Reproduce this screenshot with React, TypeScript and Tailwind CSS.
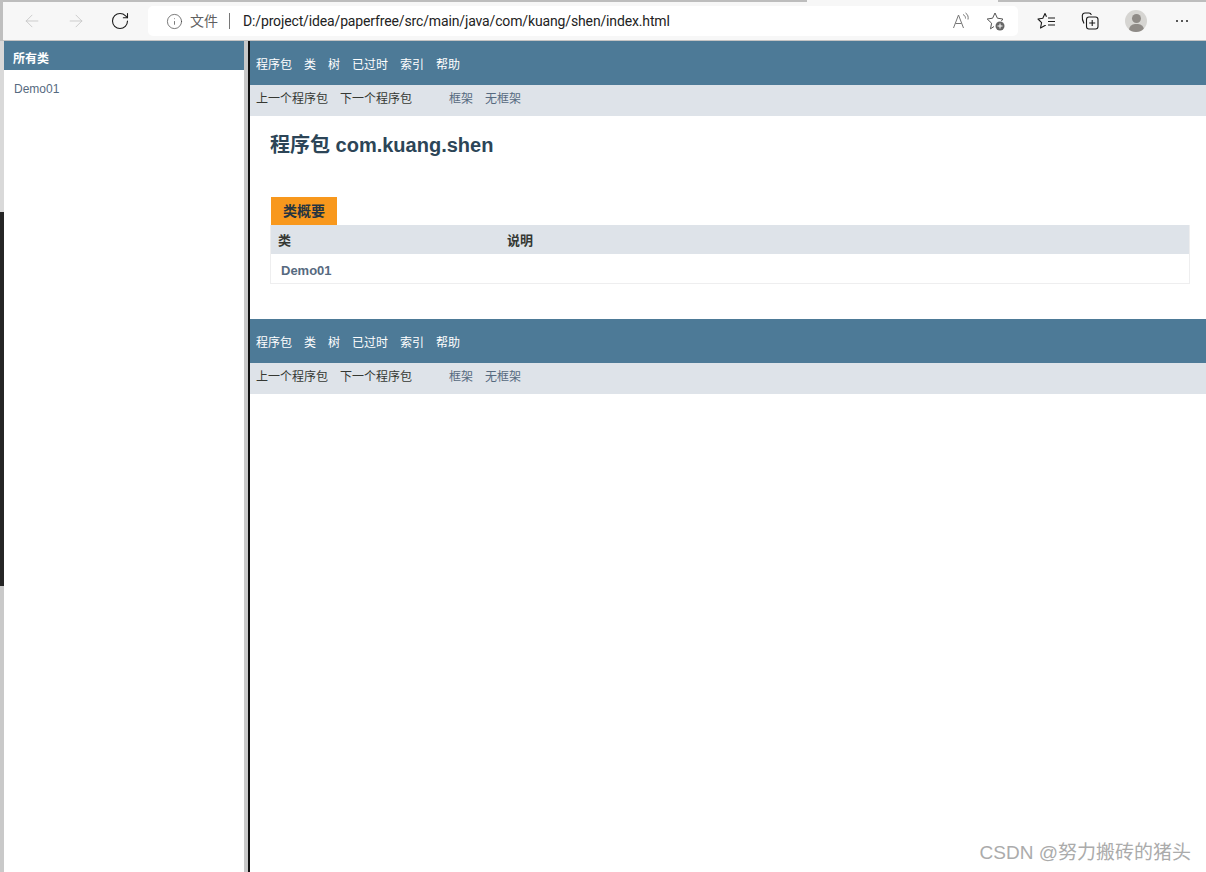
import { ArrowLeft, ArrowRight, RotateCw, Info } from 'lucide-react'

const FONT = "font-['Liberation_Sans','Noto_Sans_CJK_SC',sans-serif]"

const NAV = ['程序包', '类', '树', '已过时', '索引', '帮助']

function TopNav() {
  return (
    <div className="h-[44px] bg-[#4d7a97] flex items-end pb-[12px] pl-[6px] gap-[12px] text-[12px] leading-[16px] text-white">
      {NAV.map(item => (
        <span key={item}>{item}</span>
      ))}
    </div>
  )
}

function SubNav() {
  return (
    <div className="h-[31px] bg-[#dee3e9] flex items-center pl-[6px] text-[12px] leading-[16px] pb-[3px]">
      <span className="text-[#353833] mr-[12px]">上一个程序包</span>
      <span className="text-[#353833] mr-[37px]">下一个程序包</span>
      <span className="text-[#566a80] mr-[12px]">框架</span>
      <span className="text-[#566a80]">无框架</span>
    </div>
  )
}

function BrowserBar() {
  return (
    <div className="h-[41px] shrink-0 flex">
      <div className="w-[3px] bg-[#bfbfbf] shrink-0" />
      <div className="flex-1 min-w-0 bg-[#f7f7f7] border-b border-[#c4c4c4] flex flex-col">
        <div className="h-[2px] flex shrink-0">
          <div className="w-[804px] bg-[#bdbdbd]" />
          <div className="w-[191px]" />
          <div className="flex-1 bg-[#bdbdbd]" />
        </div>
        <div className="flex-1 flex items-center">
          <ArrowLeft size={20} strokeWidth={1} className="ml-[19px] text-[#c4c4c4]" />
          <ArrowRight size={20} strokeWidth={1} className="ml-[24px] text-[#c4c4c4]" />
          <RotateCw size={20} strokeWidth={1.3} className="ml-[24px] text-[#1a1a1a]" />
          <div className="ml-[18px] w-[870px] h-[30px] bg-white rounded-[5px] flex items-center text-[14px] text-[#333]">
            <Info size={17} strokeWidth={1} className="ml-[18px] text-[#444]" />
            <span className="ml-[7px] text-[#5f5f5f]">文件</span>
            <span className="ml-[11px] w-px h-[16px] bg-[#777]" />
            <span className="ml-[13px] font-['Roboto','Noto_Sans_CJK_SC',sans-serif] text-[#222] text-[14px] tracking-[-0.14px]">D:/project/idea/paperfree/src/main/java/com/kuang/shen/index.html</span>
            <div className="ml-auto flex items-center gap-[16px] pr-[12px]">
              {/* read aloud */}
              <svg width="18" height="18" viewBox="0 0 18 18" fill="none" stroke="#777" strokeWidth="1">
                <path d="M1.5 16 L6.5 3 L11.5 16 M3.5 11.5 H9.5" />
                <path d="M11 2.5 C13 3.5 13.5 5 13.5 6.5 M13.5 1 C16 2.5 16.5 5 16 7.5" />
              </svg>
              {/* favorite add */}
              <svg width="20" height="20" viewBox="0 0 20 20" fill="none">
                <path d="M8 15.5 L4.5 17.8 L5.6 12.2 L1.2 8 L6.6 7.2 L9 2 L11.4 7.2 L16.8 8 L15.4 10" stroke="#555" strokeWidth="1" strokeLinejoin="round" />
                <circle cx="14" cy="15" r="4.5" fill="#666" />
                <path d="M14 12.5 V17.5 M11.5 15 H16.5" stroke="#fff" strokeWidth="1" />
              </svg>
            </div>
          </div>
          <div className="ml-[19px] flex items-center">
            {/* favorites */}
            <svg width="19" height="18" viewBox="0 0 19 18" fill="none" stroke="#1a1a1a" strokeWidth="1.1">
              <path d="M9.5 4.8 L8 1.5 L5.8 6.2 L1 7 L4.6 10.6 L3.5 16 L8 13.5 H8.8" strokeLinejoin="round" />
              <path d="M11 6 H18 M11 9.5 H18 M11 13 H18" />
            </svg>
            {/* collections */}
            <svg className="ml-[25px]" width="18" height="18" viewBox="0 0 18 18" fill="none" stroke="#1a1a1a" strokeWidth="1.1">
              <path d="M3 11.5 C1.5 9 1 6 1.3 3.5 C1.5 2 2.5 1 4 1 H8 C9 1 10 1.6 10.3 3" />
              <rect x="5.5" y="5" width="11.5" height="12" rx="2.5" />
              <path d="M11.2 8 V14 M8.2 11 H14.2" />
            </svg>
            {/* profile */}
            <div className="ml-[26px] w-[22px] h-[22px] rounded-full bg-[#d6d5d2] overflow-hidden relative">
              <div className="absolute left-[6.5px] top-[4px] w-[9px] h-[9px] rounded-full bg-[#8f8b87]" />
              <div className="absolute left-[3.5px] top-[14px] w-[15px] h-[12px] rounded-full bg-[#8f8b87]" />
            </div>
            <div className="ml-[29px] flex gap-[3px]">
              <span className="w-[2px] h-[2px] bg-[#222] rounded-full" />
              <span className="w-[2px] h-[2px] bg-[#222] rounded-full" />
              <span className="w-[2px] h-[2px] bg-[#222] rounded-full" />
            </div>
          </div>
        </div>
      </div>
    </div>
  )
}

export default function App() {
  return (
    <div className={`${FONT} w-[1206px] h-[872px] overflow-hidden bg-white flex flex-col relative`}>
      <BrowserBar />

      <div className="flex-1 flex min-h-0">
        {/* window edge behind the browser */}
        <div className="w-[4px] flex flex-col shrink-0">
          <div className="h-[171px] bg-[#d9d9d9]" />
          <div className="h-[374px] bg-[#252525]" />
          <div className="flex-1 bg-[#c9c9c9]" />
        </div>

        {/* left frame */}
        <div className="w-[240px] shrink-0 bg-white">
          <div className="h-[29px] bg-[#4d7a97] text-white font-bold text-[12px] leading-[16px] pl-[9px] pt-[10px]">所有类</div>
          <div className="pl-[10px] pt-[11px] text-[12px] leading-[16px] text-[#566a80]">Demo01</div>
        </div>

        <div className="w-[4px] shrink-0 bg-[#c8c8c8]" />
        <div className="w-[2px] shrink-0 bg-[#111]" />

        {/* right frame */}
        <div className="flex-1 min-w-0 bg-white">
          <TopNav />
          <SubNav />
          <h1 className="pl-[20px] pt-[16px] text-[20px] leading-[26px] font-bold text-[#2c4557]">程序包 com.kuang.shen</h1>

          <div className="mt-[39px] ml-[20px] mr-[16px]">
            <div className="ml-[1px] w-[66px] h-[28px] bg-[#f8981d] text-[#253441] font-bold text-[14px] leading-[28px] text-center">类概要</div>
            <div className="border-x border-b border-[#eeeeef]">
              <div className="h-[29px] bg-[#dee3e9] flex items-center pt-[3px] text-[13px] font-bold text-[#353833]">
                <span className="w-[236px] pl-[7px]">类</span>
                <span>说明</span>
              </div>
              <div className="h-[29px] flex items-center pt-[5px] pl-[10px] text-[13px] font-bold text-[#566a80]">Demo01</div>
            </div>
          </div>

          <div className="mt-[35px]">
            <TopNav />
            <SubNav />
          </div>
        </div>
      </div>

      <div className="absolute right-[15px] bottom-[6px] text-[19px] leading-[26px] text-[#ababab]">CSDN @努力搬砖的猪头</div>
    </div>
  )
}
